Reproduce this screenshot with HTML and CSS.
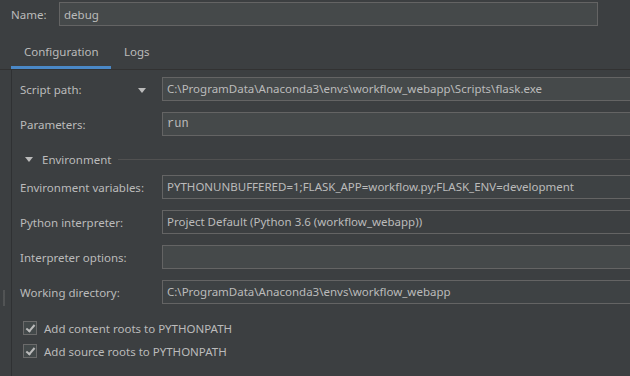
FILE: index.html
```html
<!DOCTYPE html>
<html lang="en">
<head>
    <meta charset="UTF-8">
    <title>Run Configuration</title>
    <link rel="stylesheet" href="styles.css">
</head>
<body>
    <div class="dialog">
        <div class="name-row">
            <label for="name">Name:</label>
            <input type="text" id="name" class="field name-field" value="debug">
        </div>

        <div class="tabs">
            <div class="tab active">Configuration</div>
            <div class="tab">Logs</div>
        </div>

        <div class="panel">
            <div class="grip"></div>
            <div class="row">
                <div class="label">Script path:<span class="drop"></span></div>
                <div class="field">C:\ProgramData\Anaconda3\envs\workflow_webapp\Scripts\flask.exe</div>
            </div>
            <div class="row">
                <div class="label">Parameters:</div>
                <div class="field mono">run</div>
            </div>

            <div class="section">
                <span class="arrow"></span>
                <span class="section-title">Environment</span>
                <span class="rule"></span>
            </div>

            <div class="row">
                <div class="label">Environment variables:</div>
                <div class="field readonly">PYTHONUNBUFFERED=1;FLASK_APP=workflow.py;FLASK_ENV=development</div>
            </div>
            <div class="row">
                <div class="label">Python interpreter:</div>
                <div class="field combo">Project Default (Python 3.6 (workflow_webapp))</div>
            </div>
            <div class="row">
                <div class="label">Interpreter options:</div>
                <div class="field"></div>
            </div>
            <div class="row">
                <div class="label">Working directory:</div>
                <div class="field readonly">C:\ProgramData\Anaconda3\envs\workflow_webapp</div>
            </div>

            <div class="checks">
                <label class="check"><span class="box"></span>Add content roots to PYTHONPATH</label>
                <label class="check"><span class="box"></span>Add source roots to PYTHONPATH</label>
            </div>
        </div>
    </div>
</body>
</html>
```

FILE: styles.css
```css
body {
    margin: 0;
    background-color: #3c3f41;
    color: #bbbbbb;
    font-family: "Noto Sans", "Open Sans", sans-serif;
    font-size: 11.5px;
    overflow: hidden;
    height: 376px;
}

.dialog {
    width: 634px;
}

.name-row {
    display: flex;
    align-items: center;
    padding: 2px 0 0 11px;
}

.name-row label {
    width: 48px;
}

.field {
    box-sizing: border-box;
    height: 24px;
    padding: 0 4px;
    border: 1px solid #646464;
    background-color: #45494a;
    color: #bbbbbb;
    font-family: inherit;
    font-size: inherit;
    line-height: 22px;
    white-space: nowrap;
    overflow: hidden;
}

.name-field {
    width: 539px;
    outline: none;
}

.tabs {
    display: flex;
    margin-top: 12px;
    padding-left: 11px;
    border-bottom: 1px solid #323232;
}

.tab {
    padding: 4px 13px 0;
    height: 24px;
    line-height: 20px;
    border-bottom: 3px solid transparent;
}

.tab.active {
    width: 74px;
    border-bottom-color: #4a88c7;
}

.panel {
    position: relative;
    margin-left: 11px;
    border-left: 1px solid #2f3133;
    padding: 7px 0 30px 8px;
}

.grip {
    position: absolute;
    left: -9px;
    top: 220px;
    width: 2px;
    height: 16px;
    background-image: radial-gradient(circle, #6b6b6b 0.6px, transparent 0.8px);
    background-size: 2px 2px;
}

.row {
    display: flex;
    align-items: center;
    margin-bottom: 11px;
}

.label {
    width: 142px;
    flex-shrink: 0;
    position: relative;
}

.row .field {
    flex: 1;
}

.drop {
    position: absolute;
    left: 118px;
    top: 6px;
    border-left: 4px solid transparent;
    border-right: 4px solid transparent;
    border-top: 5px solid #bbbbbb;
}

.field.mono {
    font-family: "Liberation Mono", monospace;
    font-size: 12px;
}

.readonly {
    background-color: #3e4244;
}

.combo {
    background-color: #3c3f41;
}

.section {
    display: flex;
    align-items: center;
    height: 16px;
    margin: 15px 0 8px;
}

.arrow {
    margin-left: 5px;
    margin-right: 9px;
    border-left: 4px solid transparent;
    border-right: 4px solid transparent;
    border-top: 5px solid #bbbbbb;
}

.rule {
    flex: 1;
    height: 1px;
    margin-left: 7px;
    background-color: #515151;
}

.checks {
    display: flex;
    flex-direction: column;
    gap: 9px;
    padding: 6px 0 0 3px;
}

.check {
    display: flex;
    align-items: center;
    gap: 7px;
    height: 14px;
}

.box {
    position: relative;
    box-sizing: border-box;
    width: 14px;
    height: 14px;
    border: 1px solid #6b6b6b;
    background-color: #43494a;
}

.box::after {
    content: "";
    position: absolute;
    left: 4px;
    top: 1px;
    width: 3px;
    height: 7px;
    border-right: 2px solid #bbbbbb;
    border-bottom: 2px solid #bbbbbb;
    transform: rotate(40deg);
}
```
